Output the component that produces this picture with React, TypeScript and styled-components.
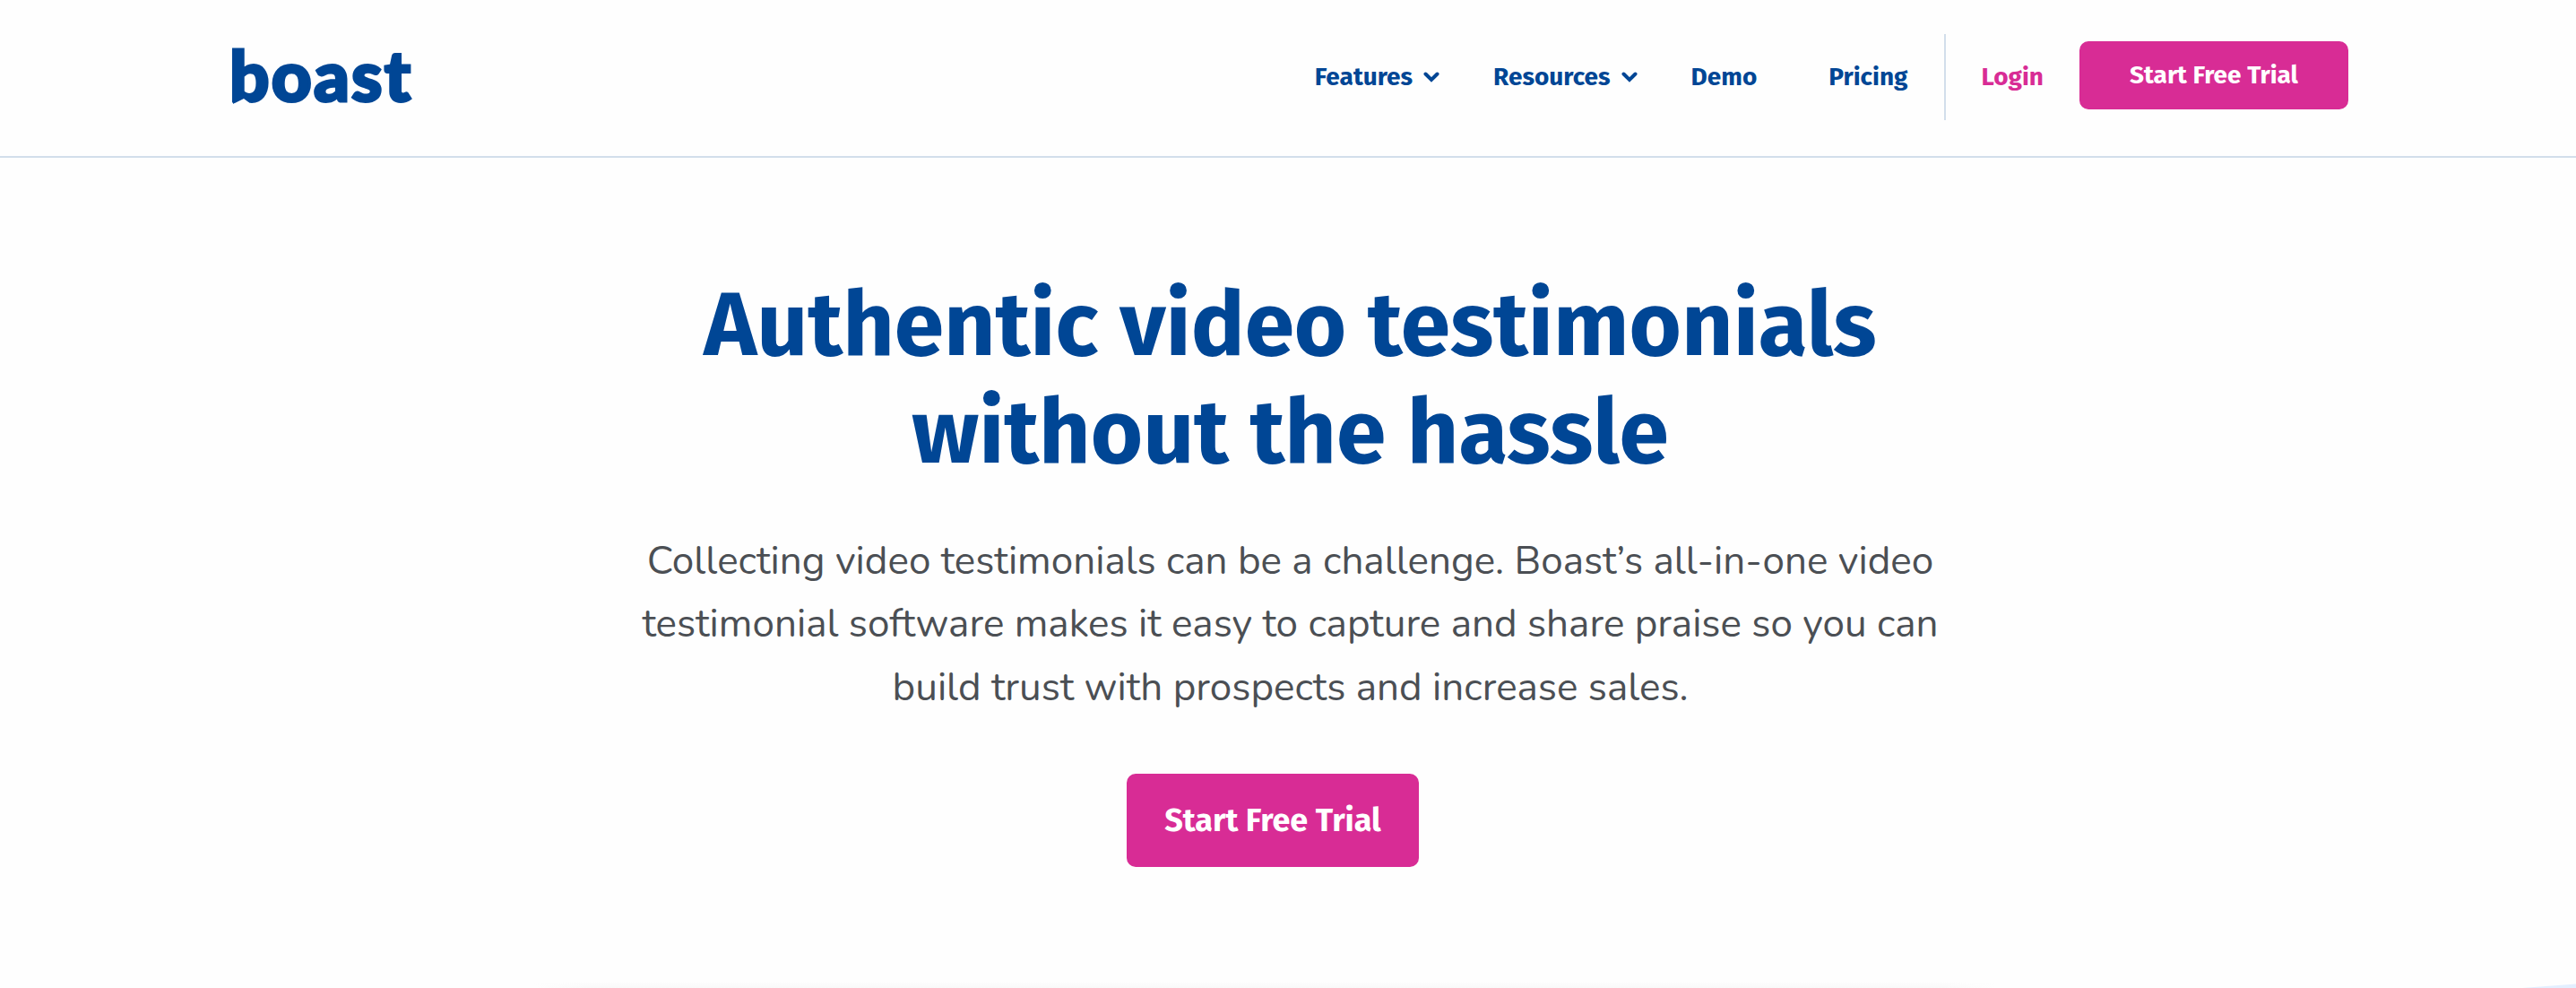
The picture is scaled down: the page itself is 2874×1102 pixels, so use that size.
import React from 'react'
import styled, { createGlobalStyle } from 'styled-components'

const GlobalStyle = createGlobalStyle`
  :root {
    --color-page: #fefefe;
    --color-blue: #004695;
    --color-pink: #d82c95;
    --color-gray: #4b4f54;
    --color-line: #d2deeb;
    --color-wave: #e3efff;
  }

  * {
    box-sizing: border-box;
  }

  body {
    margin: 0;
    background-color: var(--color-page);
    font-family: 'Fira Sans', 'Noto Sans', sans-serif;
  }
`

const Page = styled.div`
  height: 1102px;
  display: flex;
  flex-direction: column;
  overflow: hidden;
`

const Header = styled.header`
  height: 176px;
  padding: 0 254px 0 260px;
  display: flex;
  align-items: flex-start;
  justify-content: space-between;
  border-bottom: 2px solid var(--color-line);
`

const Logo = styled.a`
  position: relative;
  margin-top: 33px;
  margin-left: -4px;
  height: 100px;
  font-family: 'Lato', sans-serif;
  font-size: 78px;
  font-weight: 900;
  line-height: 100px;
  letter-spacing: 2.2px;
  color: var(--color-blue);
  text-decoration: none;
  -webkit-text-stroke: 3px var(--color-blue);
`

const LogoTail = styled.svg`
  position: absolute;
  left: 4px;
  top: 67px;
`

const Nav = styled.nav`
  display: flex;
  align-items: flex-start;
  font-size: 28px;
  font-weight: 700;
  line-height: 34px;
`

const NavLink = styled.a<{ $accent?: boolean; $menu?: boolean }>`
  display: flex;
  align-items: center;
  gap: 12px;
  margin-top: 69px;
  padding: 0 ${(props) => (props.$menu ? '20px' : '40px')} 0 40px;
  color: ${(props) => (props.$accent ? 'var(--color-pink)' : 'var(--color-blue)')};
  text-decoration: none;
`

const Divider = styled.div`
  width: 2px;
  height: 96px;
  margin-top: 38px;
  background-color: var(--color-line);
`

const Button = styled.button<{ $large?: boolean }>`
  width: ${(props) => (props.$large ? '326px' : '300px')};
  height: ${(props) => (props.$large ? '104px' : '76px')};
  padding: 0 0 1px;
  border: none;
  border-radius: 10px;
  background-color: var(--color-pink);
  color: #fff;
  font-family: inherit;
  font-size: ${(props) => (props.$large ? '36px' : '28px')};
  font-weight: 700;
  cursor: pointer;
`

const NavButton = styled(Button)`
  margin-top: 46px;
`

const Hero = styled.main`
  flex: 1;
  display: flex;
  flex-direction: column;
  align-items: center;
  padding: 127px 0 0 5px;
  text-align: center;
`

const Title = styled.h1`
  margin: 0;
  color: var(--color-blue);
  font-size: 100px;
  font-weight: 700;
  line-height: 120px;
`

const Description = styled.p`
  width: 1480px;
  margin: 48px 0 60.8px;
  color: var(--color-gray);
  font-family: 'Nunito', 'Lato', sans-serif;
  font-size: 44px;
  line-height: 70.4px;
`

const HeroButton = styled(Button)`
  margin-right: 39px;
`

const Decoration = styled.div`
  height: 6px;
  display: flex;
  justify-content: flex-end;
`

const CardShadow = styled.div`
  width: 1630px;
  height: 6px;
  margin-right: 588px;
  background: linear-gradient(to right, #fefefe, transparent 60px calc(100% - 60px), #fefefe),
    linear-gradient(#fdfdfd, #f9f9f9);
`

const Chevron: React.FC = () => (
  <svg width="18" height="12" viewBox="0 0 18 12" fill="none">
    <path
      d="M2.5 2.5L9 9L15.5 2.5"
      stroke="currentColor"
      strokeWidth="4"
      strokeLinecap="round"
    />
  </svg>
)

const menu = [
  { label: 'Features', hasMenu: true },
  { label: 'Resources', hasMenu: true },
  { label: 'Demo', hasMenu: false },
  { label: 'Pricing', hasMenu: false },
]

const App: React.FC = () => {
  return (
    <Page>
      <GlobalStyle />
      <Header>
        <Logo href="#">
          boast
          {/* speech bubble corner on the b */}
          <LogoTail width="20" height="19" viewBox="0 0 20 19">
            <path d="M0 0H11L14 4H19V13H11L0 16Z" fill="currentColor" />
            <path d="M0 16L12 10L18 14.5V19H0Z" fill="var(--color-page)" />
          </LogoTail>
        </Logo>
        <Nav>
          {menu.map(({ label, hasMenu }) => (
            <NavLink key={label} href="#" $menu={hasMenu}>
              {label}
              {hasMenu && <Chevron />}
            </NavLink>
          ))}
          <Divider />
          <NavLink href="#" $accent>
            Login
          </NavLink>
          <NavButton>Start Free Trial</NavButton>
        </Nav>
      </Header>
      <Hero>
        <Title>
          Authentic video testimonials
          <br />
          without the hassle
        </Title>
        <Description>
          Collecting video testimonials can be a challenge. Boast’s all-in-one video
          testimonial software makes it easy to capture and share praise so you can
          build trust with prospects and increase sales.
        </Description>
        <HeroButton $large>Start Free Trial</HeroButton>
      </Hero>
      <Decoration>
        <CardShadow />
        <svg width="60" height="6" viewBox="0 0 60 6">
          <path d="M0 6L60 1.5V6Z" fill="var(--color-wave)" />
        </svg>
      </Decoration>
    </Page>
  )
}

export default App
